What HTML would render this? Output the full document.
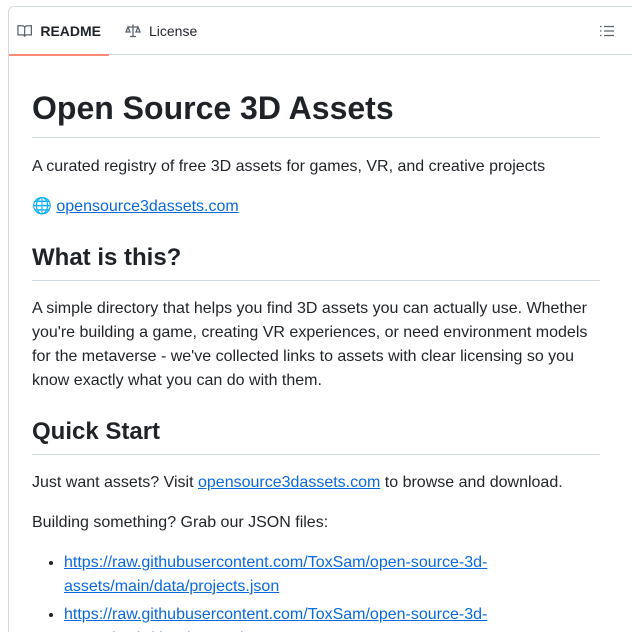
<!DOCTYPE html>
<html><head><style>
*{box-sizing:border-box;margin:0;padding:0}
html,body{width:632px;height:632px;overflow:hidden}
body{background:#fff;font-family:"Liberation Sans",sans-serif;color:#1f2328;position:relative}
.box{position:absolute;left:8px;top:6px;width:640px;height:700px;border:1px solid #d1d9e0;border-radius:6px}
.tabs{height:48px;border-bottom:1px solid #d1d9e0;position:relative}
.tab{position:absolute;top:0;height:48px;display:flex;align-items:center;font-size:14px}
.t1{left:0;font-weight:bold;padding:0 8px;border-bottom:2px solid #fd8c73;height:49px;width:100px}
.t2{left:116px}
.tab svg{margin-right:8px}
a{color:#0969da;text-decoration:underline}
.c{position:absolute;left:32px;top:0;width:568px;font-size:16px;line-height:24px}
h1{position:absolute;top:88px;left:0;width:568px;font-size:32px;line-height:40px;font-weight:600;border-bottom:1px solid #d1d9e0;padding-bottom:9px}
h2{position:absolute;left:0;width:568px;font-size:24px;line-height:30px;font-weight:600;border-bottom:1px solid #d1d9e0;padding-bottom:7px}
p{position:absolute;left:0;width:568px}
ul{position:absolute;left:0;top:551px;padding-left:32px;width:568px}
li{margin-bottom:4px}
</style></head><body>
<div class="box"><div class="tabs">
<div class="tab t1"><svg width="16" height="16" viewBox="0 0 16 16" fill="none" stroke="#59636e" stroke-width="1.3"><path d="M1 2.5h4.5a2.5 2.5 0 0 1 2.5 2.5v9a2 2 0 0 0-2-2H1z M15 2.5h-4.5A2.5 2.5 0 0 0 8 5v9a2 2 0 0 1 2-2h5z"/></svg>README</div>
<div class="tab t2"><svg width="16" height="16" viewBox="0 0 16 16" fill="none" stroke="#59636e" stroke-width="1.3"><path d="M8 1.5v12M3 4h10M5 13.5h6M3 4l-2 5h4zM13 4l-2 5h4z"/></svg><span style="font-weight:normal">License</span></div>
<svg style="position:absolute;left:590px;top:16px" width="16" height="16" viewBox="0 0 16 16" stroke="#59636e" stroke-width="1.3"><path d="M5 3.5h10M5 8h10M5 12.5h10M1 3.5h1.5M1 8h1.5M1 12.5h1.5"/></svg>
</div></div>
<div class="c">
<h1>Open Source 3D Assets</h1>
<p style="top:155px">A curated registry of free 3D assets for games, VR, and creative projects</p>
<p style="top:195px">🌐 <a>opensource3dassets.com</a></p>
<h2 style="top:243px">What is this?</h2>
<p style="top:297px">A simple directory that helps you find 3D assets you can actually use. Whether you're building a game, creating VR experiences, or need environment models for the metaverse - we've collected links to assets with clear licensing so you know exactly what you can do with them.</p>
<h2 style="top:417px">Quick Start</h2>
<p style="top:471px">Just want assets? Visit <a>opensource3dassets.com</a> to browse and download.</p>
<p style="top:511px">Building something? Grab our JSON files:</p>
<ul><li><a>https://raw.githubusercontent.com/ToxSam/open-source-3d-assets/main/data/projects.json</a></li><li><a>https://raw.githubusercontent.com/ToxSam/open-source-3d-assets/main/data/assets.json</a></li></ul>
</div>
</body></html>
